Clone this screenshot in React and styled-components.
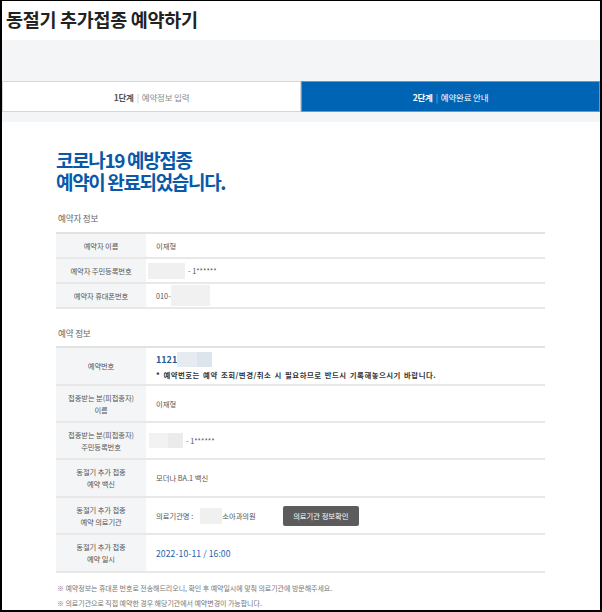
import React from "react";
import styled, { createGlobalStyle } from "styled-components";

const GlobalStyle = createGlobalStyle`
  html, body { margin: 0; padding: 0; background: #fff; }
  body { font-family: "Noto Sans CJK KR", "Noto Sans", sans-serif; color: #333; }
  * { box-sizing: border-box; }
`;

const Frame = styled.div`
  width: 602px;
  height: 612px;
  border-style: solid;
  border-color: #000;
  border-width: 1px 2px 2px 2px;
  background: #fff;
  overflow: hidden;
`;

const Header = styled.header`
  height: 39px;
  display: flex;
  align-items: center;
  padding: 0 0 4px 4px;
`;

const PageTitle = styled.h1`
  margin: 0;
  font-size: 18.5px;
  font-weight: 700;
  letter-spacing: -0.3px;
  color: #222;
`;

const StepBand = styled.div`
  background: #f4f5f7;
  padding: 41px 0 10px;
`;

const Steps = styled.div`
  display: flex;
  height: 31px;
`;

const Step = styled.div`
  flex: 1;
  display: flex;
  align-items: center;
  justify-content: center;
  font-size: 8.5px;
  letter-spacing: -0.2px;
  background: ${(p) => (p.$active ? "#0064b5" : "#fff")};
  color: ${(p) => (p.$active ? "#fff" : "#8a8a8a")};
  border: 1px solid ${(p) => (p.$active ? "#5d9bd3" : "#d6d6d6")};
  b {
    font-weight: 700;
    color: ${(p) => (p.$active ? "#fff" : "#555")};
  }
`;

const Bar = styled.span`
  margin: 0 3px;
  color: ${(p) => (p.$active ? "#9cc3e6" : "#bbb")};
`;

const Content = styled.main`
  padding: 27px 55px 0 54px;
`;

const Heading = styled.h2`
  margin: 0 0 18px;
  font-size: 19px;
  line-height: 22px;
  font-weight: 700;
  letter-spacing: -1.35px;
  color: #0a58a8;
`;

const SectionLabel = styled.h3`
  margin: 0 0 ${(p) => p.$mb ?? 6}px 2px;
  font-size: 8.6px;
  line-height: 14px;
  font-weight: 400;
  color: #666;
  letter-spacing: -0.2px;
`;

const Table = styled.div`
  border-top: 2px solid #e2e2e2;
  margin-bottom: ${(p) => p.$mb || 0}px;
`;

const Row = styled.div`
  display: grid;
  grid-template-columns: 90px 1fr;
  height: ${(p) => p.$h}px;
  border-bottom: 2px solid #e8e8e8;
`;

const Label = styled.div`
  background: #f4f5f7;
  display: flex;
  align-items: center;
  justify-content: center;
  text-align: center;
  font-size: 7.3px;
  line-height: 12px;
  color: #555;
  letter-spacing: -0.1px;
`;

const Value = styled.div`
  display: flex;
  flex-direction: ${(p) => (p.$column ? "column" : "row")};
  justify-content: ${(p) => (p.$column ? "center" : "flex-start")};
  align-items: ${(p) => (p.$column ? "flex-start" : "center")};
  padding-left: ${(p) => p.$pl ?? 10}px;
  font-size: 7.3px;
  color: #555;
`;

const Blur = styled.span`
  display: inline-block;
  width: ${(p) => p.$w}px;
  height: ${(p) => p.$h}px;
  margin-left: ${(p) => p.$ml || 0}px;
  background: ${(p) =>
    p.$split
      ? `linear-gradient(90deg, ${p.$c1} 0 ${p.$split}px, ${p.$c2} ${p.$split}px)`
      : p.$c1};
`;

const Masked = styled.span`
  margin-left: 3px;
  color: #555;
`;

const ResNumber = styled.div`
  display: flex;
  align-items: center;
  margin-bottom: 2px;
  b {
    font-size: 9px;
    font-weight: 700;
    color: #1d5a9a;
  }
`;

const Notice = styled.div`
  font-size: 7.4px;
  font-weight: 700;
  color: #333;
  letter-spacing: 0.5px;
  word-spacing: 1px;
`;

const DateText = styled.span`
  font-size: 8.6px;
  color: #2962a6;
  letter-spacing: 0.1px;
`;

const InfoButton = styled.button`
  margin-left: 27px;
  width: 76px;
  height: 20px;
  border: none;
  border-radius: 2px;
  background: #5c5c5c;
  color: #fff;
  font-family: inherit;
  font-size: 7.3px;
  padding: 0;
`;

const Notes = styled.ul`
  list-style: none;
  margin: 8px 0 0 1px;
  padding: 0;
  li {
    font-size: 7px;
    line-height: 15px;
    color: #777;
    letter-spacing: -0.05px;
  }
`;

export default function App() {
  return (
    <>
      <GlobalStyle />
      <Frame>
        <Header>
          <PageTitle>동절기 추가접종 예약하기</PageTitle>
        </Header>
        <StepBand>
          <Steps>
            <Step>
              <b>1단계</b>
              <Bar>|</Bar>예약정보 입력
            </Step>
            <Step $active>
              <b>2단계</b>
              <Bar $active>|</Bar>예약완료 안내
            </Step>
          </Steps>
        </StepBand>
        <Content>
          <Heading>
            코로나19 예방접종
            <br />
            예약이 완료되었습니다.
          </Heading>

          <SectionLabel $mb={7}>예약자 정보</SectionLabel>
          <Table $mb={17}>
            <Row $h={25}>
              <Label>예약자 이름</Label>
              <Value>이재형</Value>
            </Row>
            <Row $h={25}>
              <Label>예약자 주민등록번호</Label>
              <Value $pl={2}>
                <Blur $w={37} $h={16} $c1="#f0f0f0" />
                <Masked>- 1******</Masked>
              </Value>
            </Row>
            <Row $h={25}>
              <Label>예약자 휴대폰번호</Label>
              <Value>
                010-
                <Blur $w={39} $h={21} $c1="#f1f1f1" />
              </Value>
            </Row>
          </Table>

          <SectionLabel>예약 정보</SectionLabel>
          <Table>
            <Row $h={38}>
              <Label>예약번호</Label>
              <Value $column>
                <ResNumber>
                  <b>1121</b>
                  <Blur $w={35} $h={15} $c1="#e6ebf1" $c2="#dce4ec" $split={20} />
                </ResNumber>
                <Notice>* 예약번호는 예약 조회/변경/취소 시 필요하므로 반드시 기록해놓으시기 바랍니다.</Notice>
              </Value>
            </Row>
            <Row $h={37}>
              <Label>
                접종받는 분(피접종자)
                <br />
                이름
              </Label>
              <Value>이재형</Value>
            </Row>
            <Row $h={37}>
              <Label>
                접종받는 분(피접종자)
                <br />
                주민등록번호
              </Label>
              <Value $pl={3}>
                <Blur $w={34} $h={15} $c1="#f2f2f2" $c2="#ebebeb" $split={19} />
                <Masked>- 1******</Masked>
              </Value>
            </Row>
            <Row $h={38}>
              <Label>
                동절기 추가 접종
                <br />
                예약 백신
              </Label>
              <Value>모더나 BA.1 백신</Value>
            </Row>
            <Row $h={37}>
              <Label>
                동절기 추가 접종
                <br />
                예약 의료기관
              </Label>
              <Value>
                의료기관명 :
                <Blur $w={22} $h={16} $c1="#f0f0f0" $ml={7} />
                소아과의원
                <InfoButton>의료기관 정보확인</InfoButton>
              </Value>
            </Row>
            <Row $h={38}>
              <Label>
                동절기 추가 접종
                <br />
                예약 일시
              </Label>
              <Value>
                <DateText>2022-10-11 / 16:00</DateText>
              </Value>
            </Row>
          </Table>

          <Notes>
            <li>※ 예약정보는 휴대폰 번호로 전송해드리오니, 확인 후 예약일시에 맞춰 의료기관에 방문해주세요.</li>
            <li>※ 의료기관으로 직접 예약한 경우 해당기관에서 예약변경이 가능합니다.</li>
          </Notes>
        </Content>
      </Frame>
    </>
  );
}
